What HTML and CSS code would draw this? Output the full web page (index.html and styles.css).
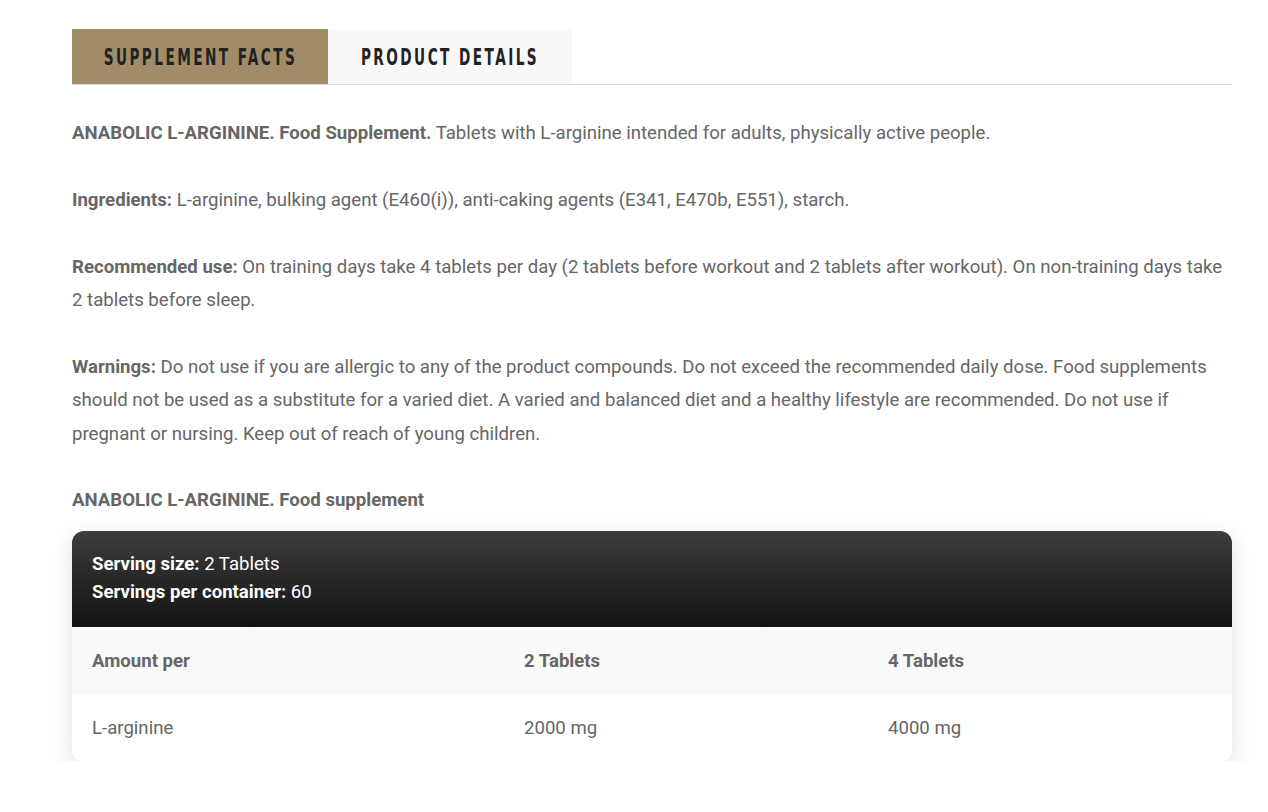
FILE: index.html
```html
<!DOCTYPE html>
<html>
<head>
<meta charset="utf-8">
<link rel="stylesheet" href="styles.css">
</head>
<body>
<div class="wrap">
  <div class="tabs">
    <div class="tab active"><span class="tab-label">SUPPLEMENT FACTS</span></div>
    <div class="tab"><span class="tab-label">PRODUCT DETAILS</span></div>
  </div>
  <div class="content">
    <p><b>ANABOLIC L-ARGININE. Food Supplement.</b> Tablets with L-arginine intended for adults, physically active people.</p>
    <p><b>Ingredients:</b> L-arginine, bulking agent (E460(i)), anti-caking agents (E341, E470b, E551), starch.</p>
    <p><b>Recommended use:</b> On training days take 4 tablets per day (2 tablets before workout and 2 tablets after workout). On non-training days take 2 tablets before sleep.</p>
    <p><b>Warnings:</b> Do not use if you are allergic to any of the product compounds. Do not exceed the recommended daily dose. Food supplements should not be used as a substitute for a varied diet. A varied and balanced diet and a healthy lifestyle are recommended. Do not use if pregnant or nursing. Keep out of reach of young children.</p>
    <p class="title"><b>ANABOLIC L-ARGININE. Food supplement</b></p>
    <div class="card">
      <div class="card-head">
        <div><b>Serving size:</b> 2 Tablets</div>
        <div><b>Servings per container:</b> 60</div>
      </div>
      <div class="row head-row">
        <div>Amount per</div>
        <div>2 Tablets</div>
        <div>4 Tablets</div>
      </div>
      <div class="row">
        <div>L-arginine</div>
        <div>2000 mg</div>
        <div>4000 mg</div>
      </div>
    </div>
  </div>
</div>
</body>
</html>
```
FILE: styles.css
```css
* { box-sizing: border-box; }
html, body { margin: 0; padding: 0; background: #fff; }
body {
  font-family: Roboto, "Liberation Sans", sans-serif;
  color: #666;
  font-size: 18.6px;
}
.wrap {
  width: 1160px;
  margin-left: 72px;
  padding-top: 29px;
}
.tabs {
  display: flex;
  border-bottom: 1px solid #dcdcdc;
}
.tab {
  height: 55px;
  display: flex;
  align-items: center;
  justify-content: center;
  background: #f8f8f8;
  width: 244px;
}
.tab.active {
  background: #a08d67;
  width: 256px;
}
.tab-label {
  display: inline-block;
  font-family: "DejaVu Sans Condensed", "DejaVu Sans", sans-serif;
  font-weight: bold;
  font-size: 22.5px;
  letter-spacing: 3.6px;
  color: #222;
  transform: scaleX(0.675);
  white-space: nowrap;
}
.content {
  padding-top: 32px;
}
.content p {
  margin: 0 0 33.4px 0;
  line-height: 33.4px;
}
.content p.title {
  margin-bottom: 13px;
}
.card {
  border-radius: 12px;
  overflow: hidden;
  box-shadow: 0 6px 24px rgba(0,0,0,0.12);
  background: #fff;
}
.card-head {
  height: 96px;
  background: linear-gradient(#3c3c3c, #131313);
  color: #fff;
  padding: 19px 20px 0;
  line-height: 28px;
}
.row {
  display: grid;
  grid-template-columns: 432px 364px 1fr;
  height: 67px;
  align-items: center;
  padding-left: 20px;
}
.head-row {
  background: #f9f9f9;
  font-weight: bold;
  height: 68px;
}
```
